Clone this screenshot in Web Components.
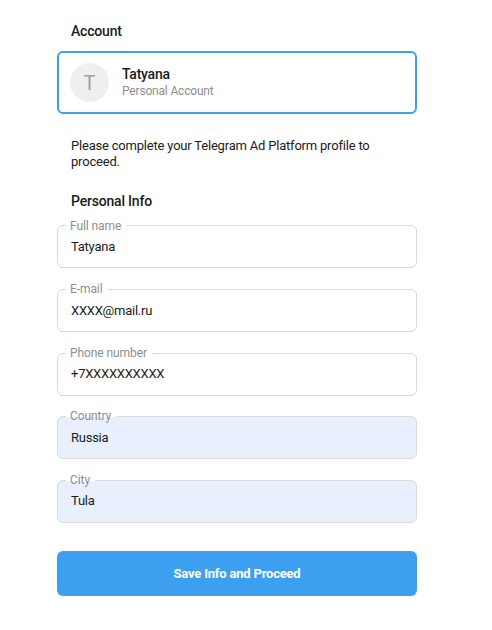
<!DOCTYPE html>
<html><head><meta charset="utf-8"><style>
html,body{margin:0;padding:0;background:#fff;font-family:Roboto,"Liberation Sans",sans-serif;color:#222}
</style></head><body>
<template id="t-field"><style>
:host{display:block;position:relative;height:43px;box-sizing:border-box;border:1px solid #d8dade;border-radius:6px;background:#fff;margin-bottom:20.6px}
:host([filled]){background:#e8f0fe}
.l{position:absolute;left:8px;top:-7.8px;height:14px;line-height:14px;padding:0 5px 0 4px;font-size:12px;letter-spacing:-.08px;color:#8c8e90;background:linear-gradient(#fff 57%,transparent 57%)}
.v{padding:.6px 0 0 13px;line-height:40px;font-size:13px;letter-spacing:-.25px;color:#1c1c1c}
</style><span class="l"></span><div class="v"></div></template>
<template id="t-account"><style>
:host{display:flex;align-items:center;gap:13px;height:63px;box-sizing:border-box;border:2px solid #3d9ff0;border-radius:6px;padding-left:11px}
.a{width:39px;height:39px;border-radius:50%;background:#efefef;color:#a0a0a0;font-size:20px;display:flex;align-items:center;justify-content:center}
.n{font-size:14px;font-weight:500;line-height:16px;color:#1c1c1c;letter-spacing:-.25px;margin:-1px 0 1px}
.s{font-size:12px;line-height:16px;color:#8c8e90;letter-spacing:-.18px}
</style><div class="a">T</div><div><div class="n"><slot name="name"></slot></div><div class="s"><slot name="sub"></slot></div></div></template>
<template id="t-btn"><style>
:host{display:flex;align-items:center;justify-content:center;height:45px;border-radius:6px;background:#3d9ff0;color:#fff;font-size:13px;font-weight:700;letter-spacing:-.2px;margin-top:28px}
</style><slot></slot></template>
<template id="t-page"><style>
:host{display:block;width:360px;margin-left:57px;padding-top:23px}
h3{margin:0 0 12px 14px;font-size:14px;font-weight:500;line-height:16px;color:#1c1c1c;letter-spacing:-.2px}
p{margin:24px 30px 23px 14px;font-size:13px;line-height:16px;color:#1c1c1c;letter-spacing:-.2px}
h3.b{margin-bottom:16.4px}
</style>
<h3>Account</h3>
<ad-account><span slot="name">Tatyana</span><span slot="sub">Personal Account</span></ad-account>
<p>Please complete your Telegram Ad Platform profile to proceed.</p>
<h3 class="b">Personal Info</h3>
<ad-field label="Full name" value="Tatyana"></ad-field>
<ad-field label="E-mail" value="XXXX@mail.ru"></ad-field>
<ad-field label="Phone number" value="+7XXXXXXXXXX"></ad-field>
<ad-field label="Country" value="Russia" filled></ad-field>
<ad-field label="City" value="Tula" filled></ad-field>
<ad-button>Save Info and Proceed</ad-button>
</template>
<ad-page></ad-page>
<script>
const T=id=>document.getElementById(id).content.cloneNode(true);
class Base extends HTMLElement{constructor(){super();this.attachShadow({mode:'open'}).appendChild(T(this.constructor.tpl));}}
class AdField extends Base{static tpl='t-field';connectedCallback(){this.shadowRoot.querySelector('.l').textContent=this.getAttribute('label');this.shadowRoot.querySelector('.v').textContent=this.getAttribute('value');}}
class AdAccount extends Base{static tpl='t-account'}
class AdButton extends Base{static tpl='t-btn'}
class AdPage extends Base{static tpl='t-page'}
customElements.define('ad-field',AdField);
customElements.define('ad-account',AdAccount);
customElements.define('ad-button',AdButton);
customElements.define('ad-page',AdPage);
</script>
</body></html>
